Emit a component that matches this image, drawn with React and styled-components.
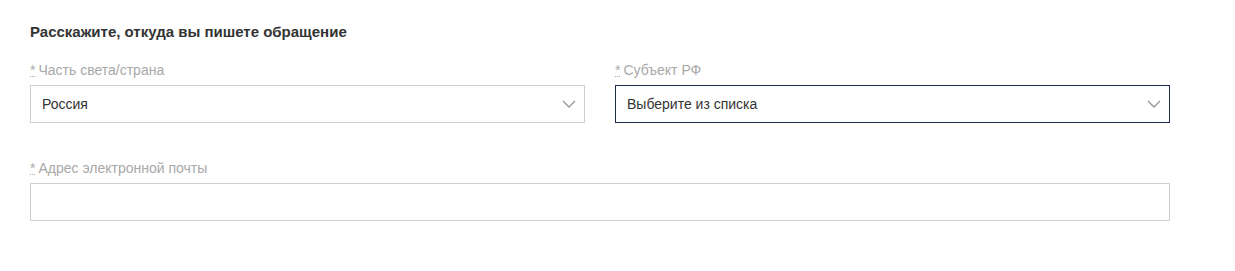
import React from 'react';
import styled, { createGlobalStyle } from 'styled-components';

const Global = createGlobalStyle`
	body {
		margin: 0;
		background: #fff;
		font-family: "Liberation Sans", Arial, sans-serif;
	}
`;

const Form = styled.div`
	width: 1140px;
	padding: 23px 30px 0 30px;
`;

const Title = styled.div`
	font-size: 15px;
	font-weight: bold;
	color: #333;
	line-height: 18px;
	margin-bottom: 21px;
`;

const Row = styled.div`
	display: grid;
	grid-template-columns: ${props => props.cols || '1fr'};
	column-gap: 30px;
	margin-bottom: 37px;
`;

const Field = styled.div`
	display: flex;
	flex-direction: column;
`;

const Label = styled.label`
	font-size: 14px;
	color: #a8a8a8;
	line-height: 16px;
	margin-bottom: 7px;
	abbr {
		text-decoration: none;
		border-bottom: 1px dotted #a8a8a8;
		line-height: 11px;
		display: inline-block;
		margin-right: 3px;
	}
`;

const Box = styled.div`
	box-sizing: border-box;
	height: 38px;
	border: 1px solid ${props => props.active ? '#1d2b45' : '#cfcfcf'};
	display: flex;
	align-items: center;
	justify-content: space-between;
	padding: 0 8px 0 11px;
	font-size: 14px;
	color: #333;
	background: #fff;
`;

const Chevron = () => (
	<svg width="14" height="8" viewBox="0 0 14 8">
		<path d="M1 1 L7 7 L13 1" fill="none" stroke="#999" strokeWidth="1.4" />
	</svg>
);

function FieldLabel({ children }) {
	return (
		<Label><abbr title="обязательное поле">*</abbr>{children}</Label>
	);
}

export default function App() {
	return (
		<Form>
			<Global />
			<Title>Расскажите, откуда вы пишете обращение</Title>
			<Row cols="1fr 1fr">
				<Field>
					<FieldLabel>Часть света/страна</FieldLabel>
					<Box>Россия <Chevron /></Box>
				</Field>
				<Field>
					<FieldLabel>Субъект РФ</FieldLabel>
					<Box active>Выберите из списка <Chevron /></Box>
				</Field>
			</Row>
			<Row>
				<Field>
					<FieldLabel>Адрес электронной почты</FieldLabel>
					<Box />
				</Field>
			</Row>
		</Form>
	);
}
